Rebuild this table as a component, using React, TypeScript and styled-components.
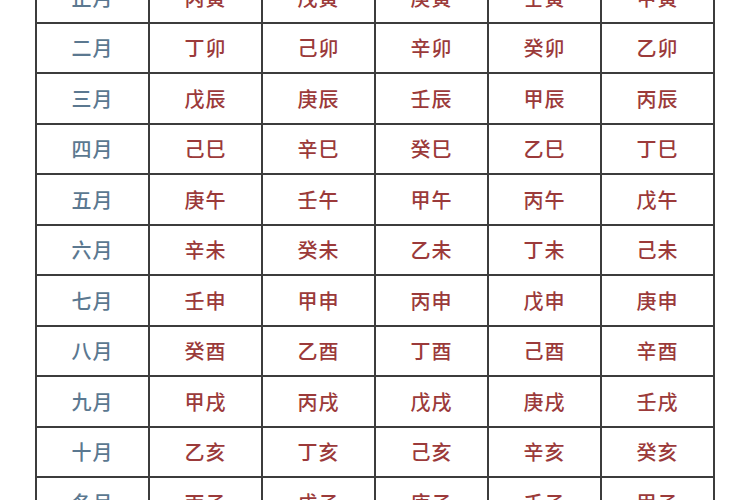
import React from 'react';
import styled, { createGlobalStyle } from 'styled-components';

const GlobalStyle = createGlobalStyle`
  html, body {
    margin: 0;
    padding: 0;
    background: #ffffff;
  }
  body {
    width: 750px;
    height: 500px;
    overflow: hidden;
    font-family: "Noto Sans CJK SC", "Noto Sans", sans-serif;
  }
`;

const Page = styled.div`
  width: 750px;
  height: 500px;
  overflow: hidden;
  padding-left: 35px;
  box-sizing: border-box;
`;

const Table = styled.table`
  margin-top: -29px;
  width: 680px;
  border-collapse: collapse;
  table-layout: fixed;
`;

const Row = styled.tr`
  height: 50.5px;
`;

const Cell = styled.td<{ $month?: boolean }>`
  border: 2px solid #3c3c3c;
  text-align: center;
  vertical-align: middle;
  padding: 0;
  font-size: 20px;
  font-weight: 500;
  letter-spacing: 1px;
  color: ${(p) => (p.$month ? '#5b7890' : '#9b3a3a')};
`;

const rows: string[][] = [
  ['正月', '丙寅', '戊寅', '庚寅', '壬寅', '甲寅'],
  ['二月', '丁卯', '己卯', '辛卯', '癸卯', '乙卯'],
  ['三月', '戊辰', '庚辰', '壬辰', '甲辰', '丙辰'],
  ['四月', '己巳', '辛巳', '癸巳', '乙巳', '丁巳'],
  ['五月', '庚午', '壬午', '甲午', '丙午', '戊午'],
  ['六月', '辛未', '癸未', '乙未', '丁未', '己未'],
  ['七月', '壬申', '甲申', '丙申', '戊申', '庚申'],
  ['八月', '癸酉', '乙酉', '丁酉', '己酉', '辛酉'],
  ['九月', '甲戌', '丙戌', '戊戌', '庚戌', '壬戌'],
  ['十月', '乙亥', '丁亥', '己亥', '辛亥', '癸亥'],
  ['冬月', '丙子', '戊子', '庚子', '壬子', '甲子'],
];

export default function App() {
  return (
    <>
      <GlobalStyle />
      <Page>
        <Table>
          <tbody>
            {rows.map((r) => (
              <Row key={r[0]}>
                {r.map((c, i) => (
                  <Cell key={i} $month={i === 0}>
                    {c}
                  </Cell>
                ))}
              </Row>
            ))}
          </tbody>
        </Table>
      </Page>
    </>
  );
}
